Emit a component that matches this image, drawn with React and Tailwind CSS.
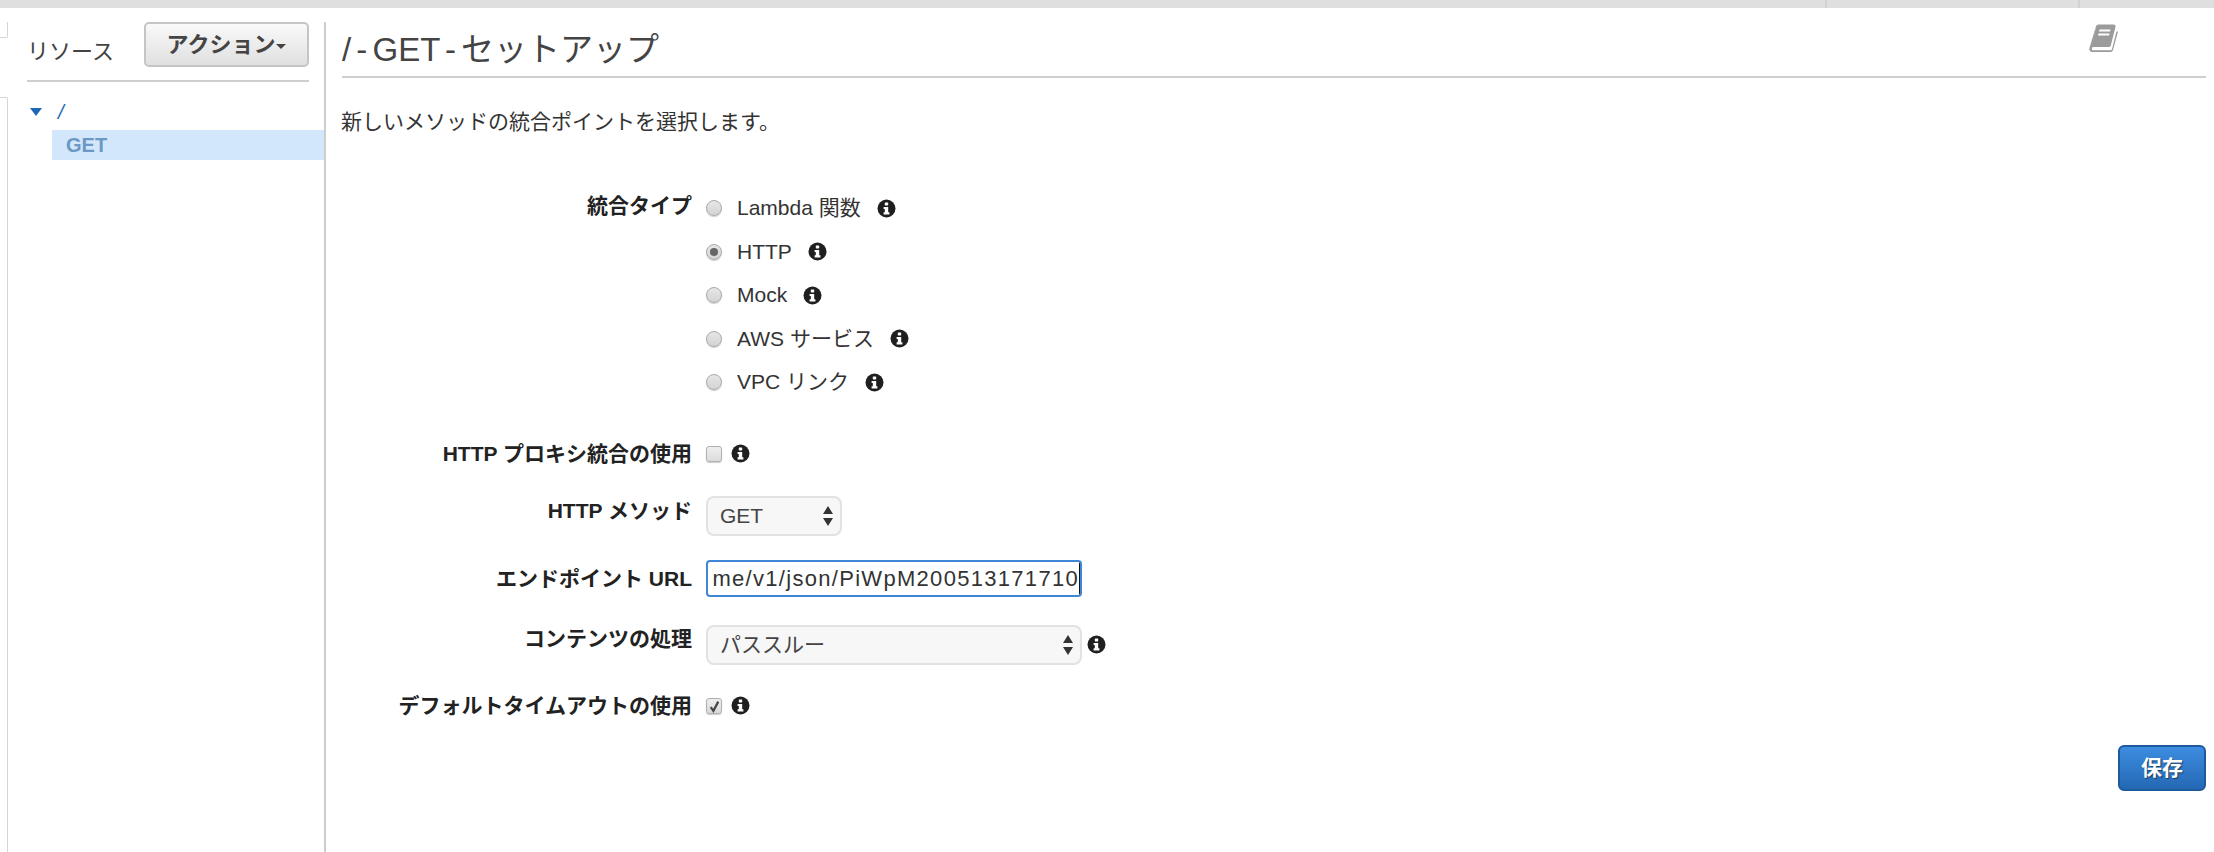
const font = '[font-family:"Liberation_Sans","Noto_Sans_CJK_JP",sans-serif]';

function InfoIcon() {
  return (
    <svg width="19" height="19" viewBox="0 0 19 19" className="shrink-0">
      <circle cx="9.5" cy="9.5" r="9" fill="#1f1f1f" />
      <rect x="7.8" y="3.4" width="3.4" height="3" rx="0.6" fill="#fff" />
      <path d="M6.6 7.9h4.6v5.4h1.2v2.1H6.6v-2.1h1.2v-3.3H6.6z" fill="#fff" />
    </svg>
  );
}

function Radio({ checked }) {
  return (
    <span className="w-4 h-4 rounded-full border border-[#a9a9a9] bg-gradient-to-b from-[#e6e6e6] to-[#d4d4d4] shadow-[0_1px_1px_rgba(0,0,0,0.2)] flex items-center justify-center shrink-0">
      {checked && <span className="w-2 h-2 rounded-full bg-[#666]" />}
    </span>
  );
}

function RadioRow({ label, checked, h }) {
  return (
    <div className={`flex items-center ${h}`}>
      <Radio checked={checked} />
      <span className="ml-[15px] mr-[16px] text-[21px] text-[#333]">{label}</span>
      <InfoIcon />
    </div>
  );
}

function Label({ children, className }) {
  return <div className={`w-[692px] shrink-0 text-right text-[21px] font-bold text-[#222] ${className}`}>{children}</div>;
}

function Arrows() {
  return (
    <svg width="12" height="20" viewBox="0 0 12 20" className="shrink-0">
      <path d="M6 0l5 8H1zM6 20l-5-8h10z" fill="#333" />
    </svg>
  );
}

function Select({ width, children }) {
  return (
    <div className={`${width} h-[40px] ml-[14px] pl-[12px] pr-[6px] flex items-center justify-between rounded-[8px] border-2 border-[#e2e2e2] bg-[#f7f7f7] text-[21px] text-[#444]`}>
      <span>{children}</span>
      <Arrows />
    </div>
  );
}

export default function App() {
  return (
    <div className={`w-[2214px] h-[852px] overflow-hidden bg-white ${font}`}>
      {/* ブラウザ上部の帯 */}
      <div className="h-[8px] bg-[#dfdfdf] flex justify-end">
        <div className="w-[389px] border-l-2 border-[#d2d2d2] flex justify-end">
          <div className="w-[136px] border-l-2 border-[#d2d2d2]" />
        </div>
      </div>

      <div className="flex h-[844px]">
        {/* 左端の切れたパネル */}
        <div className="w-[8px] shrink-0 pt-[14px]">
          <div className="h-[16px] border-r border-b border-[#d5d5d5] rounded-br-[2px]" />
          <div className="h-[59px]" />
          <div className="h-[755px] border-r border-t border-[#d5d5d5] rounded-tr-[2px]" />
        </div>

        {/* リソース */}
        <aside className="w-[316px] shrink-0 pt-[14px] pl-[19px]">
          <div className="w-[282px] h-[60px] border-b-2 border-[#cfcfcf] flex justify-between pb-[12px]">
            <span className="text-[22px] text-[#444] pt-[18px] leading-[24px]">リソース</span>
            <button className="w-[165px] h-[45px] rounded-[5px] border-2 border-[#c5c5c5] bg-gradient-to-b from-[#f9f9f9] to-[#e0e0e0] flex items-center justify-center text-[22px] font-bold text-[#444]">
              アクション
              <span className="ml-[1px] mt-[3px] border-x-[5px] border-t-[5px] border-x-transparent border-t-[#444]" />
            </button>
          </div>
          <div className="pt-[17px]">
            <div className="h-[31px] pb-[6px] flex items-center">
              <span className="ml-[3px] border-x-[6px] border-t-[8px] border-x-transparent border-t-[#1f66b5]" />
              <span className="ml-[16px] text-[21px] italic text-[#2a6db5]">/</span>
            </div>
            <div className="ml-[25px] h-[30px] pl-[14px] flex items-center bg-[#d2e7fb] text-[20px] font-bold text-[#6c98c4]">GET</div>
          </div>
        </aside>

        {/* 本体 */}
        <main className="flex-1 flex">
          <div className="w-[2px] h-[830px] mt-[14px] bg-[#cdcdcd] shrink-0" />
          <div className="flex-1 pl-[16px] pt-[14px]">
            <div className="w-[1864px] h-[56px] border-b-2 border-[#cfcfcf] flex justify-between">
              <h1 className="text-[33px] leading-[40px] pt-[8px] text-[#444] [word-spacing:-4px]">/ - GET - セットアップ</h1>
              <svg width="32" height="30" viewBox="0 0 32 30" className="mr-[86px] mt-[2px]">
                <path d="M8 2.5A2.5 2.5 0 0 1 10.500 .5h15a2 2 0 0 1 2 2.500L22.800 21.500a2 2 0 0 1-2 1.500H5a3 3 0 0 0-1.500 .5z" fill="#9b9b9b" />
                <path d="M8 2L1.500 24a3 3 0 0 0 3 4h18a2.500 2.500 0 0 0 2.500-2L30 7.500h-1.500L24 25a1.500 1.500 0 0 1-1.500 1.200H5a1.300 1.300 0 0 1-1-1.700z" fill="#9b9b9b" />
                <path d="M11.500 5.500h11l-.5 2h-11zM10.500 9.500h11l-.5 2h-11z" fill="#fff" />
              </svg>
            </div>
            <p className="mt-[32px] -ml-px text-[21px] leading-[24px] text-[#333]">新しいメソッドの統合ポイントを選択します。</p>

            {/* フォーム */}
            <div className="-ml-[342px] mt-[52px]">
              <div className="flex">
                <Label className="leading-[24px] pt-[8px]">統合タイプ</Label>
                <div className="pl-[14px] flex flex-col">
                  <RadioRow label="Lambda 関数" h="h-[44px]" />
                  <RadioRow label="HTTP" checked h="h-[43px]" />
                  <RadioRow label="Mock" h="h-[44px]" />
                  <RadioRow label="AWS サービス" h="h-[43px]" />
                  <RadioRow label="VPC リンク" h="h-[44px]" />
                </div>
              </div>

              <div className="flex items-center mt-[38px] h-[24px]">
                <Label>HTTP プロキシ統合の使用</Label>
                <span className="ml-[14px] w-[16px] h-[16px] rounded-[3px] border border-[#b0b0b0] bg-gradient-to-b from-[#eee] to-[#dcdcdc] shadow-[0_1px_1px_rgba(0,0,0,0.2)]" />
                <span className="ml-[9px] -mt-[2px]"><InfoIcon /></span>
              </div>

              <div className="flex mt-[30px]">
                <Label className="leading-[24px] pt-[3px]">HTTP メソッド</Label>
                <Select width="w-[136px]">GET</Select>
              </div>

              <div className="flex mt-[24px]">
                <Label className="leading-[38px]">エンドポイント URL</Label>
                <div className="w-[376px] h-[37px] ml-[14px] pl-[3px] rounded-[4px] border-2 border-[#3f87d6] bg-white overflow-hidden flex items-center justify-end text-[22px] tracking-[1.3px] text-[#333] whitespace-nowrap">
                  <span className="border-r border-[#111]">me/v1/json/PiWpM200513171710</span>
                </div>
              </div>

              <div className="flex mt-[27px]">
                <Label className="leading-[24px] pt-[2px]">コンテンツの処理</Label>
                <Select width="w-[376px]">パススルー</Select>
                <span className="ml-[5px] mt-[10px]"><InfoIcon /></span>
              </div>

              <div className="flex items-center mt-[29px] h-[24px]">
                <Label>デフォルトタイムアウトの使用</Label>
                <span className="ml-[14px] w-[16px] h-[16px] rounded-[3px] border border-[#b0b0b0] bg-gradient-to-b from-[#eee] to-[#d8d8d8] flex items-center justify-center shadow-[0_1px_1px_rgba(0,0,0,0.2)]">
                  <svg width="13" height="13" viewBox="0 0 12 12">
                    <path d="M2.500 6.500L5 10 9.500 1.500" fill="none" stroke="#444" strokeWidth="2" />
                  </svg>
                </span>
                <span className="ml-[9px] -mt-[2px]"><InfoIcon /></span>
              </div>

              <div className="w-[2206px] flex justify-end mt-[27px]">
                <button className="w-[88px] h-[46px] rounded-[6px] border-2 border-[#1d5a9e] bg-gradient-to-b from-[#3d8de0] to-[#2468b4] text-[21px] font-bold text-white [text-shadow:1px_1px_1px_rgba(0,0,0,0.5)]">保存</button>
              </div>
            </div>
          </div>
        </main>
      </div>
    </div>
  );
}
